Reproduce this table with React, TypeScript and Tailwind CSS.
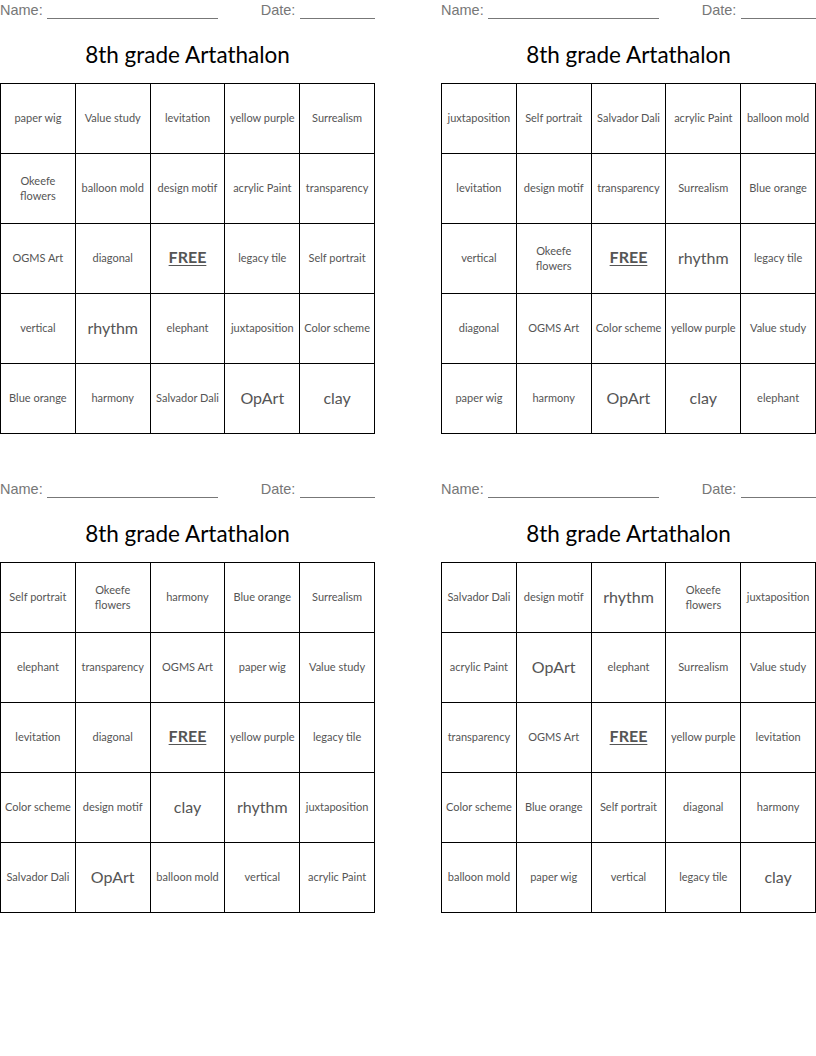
const BIG = new Set(["rhythm", "OpArt", "clay"]);

const cards: string[][] = [
  [
    "paper wig", "Value study", "levitation", "yellow purple", "Surrealism",
    "Okeefe flowers", "balloon mold", "design motif", "acrylic Paint", "transparency",
    "OGMS Art", "diagonal", "FREE", "legacy tile", "Self portrait",
    "vertical", "rhythm", "elephant", "juxtaposition", "Color scheme",
    "Blue orange", "harmony", "Salvador Dali", "OpArt", "clay",
  ],
  [
    "juxtaposition", "Self portrait", "Salvador Dali", "acrylic Paint", "balloon mold",
    "levitation", "design motif", "transparency", "Surrealism", "Blue orange",
    "vertical", "Okeefe flowers", "FREE", "rhythm", "legacy tile",
    "diagonal", "OGMS Art", "Color scheme", "yellow purple", "Value study",
    "paper wig", "harmony", "OpArt", "clay", "elephant",
  ],
  [
    "Self portrait", "Okeefe flowers", "harmony", "Blue orange", "Surrealism",
    "elephant", "transparency", "OGMS Art", "paper wig", "Value study",
    "levitation", "diagonal", "FREE", "yellow purple", "legacy tile",
    "Color scheme", "design motif", "clay", "rhythm", "juxtaposition",
    "Salvador Dali", "OpArt", "balloon mold", "vertical", "acrylic Paint",
  ],
  [
    "Salvador Dali", "design motif", "rhythm", "Okeefe flowers", "juxtaposition",
    "acrylic Paint", "OpArt", "elephant", "Surrealism", "Value study",
    "transparency", "OGMS Art", "FREE", "yellow purple", "levitation",
    "Color scheme", "Blue orange", "Self portrait", "diagonal", "harmony",
    "balloon mold", "paper wig", "vertical", "legacy tile", "clay",
  ],
];

function Cell({ word }: { word: string }) {
  if (word === "FREE") {
    return (
      <div className="h-[70px] border-r border-b border-black flex items-center justify-center pb-[3px]">
        <span className="text-[16px] font-bold underline underline-offset-2 text-[#555]">FREE</span>
      </div>
    );
  }
  return (
    <div className="h-[70px] border-r border-b border-black flex items-center justify-center px-[4px] pb-[2px] text-center">
      <span
        className={
          BIG.has(word)
            ? "text-[16px] leading-[18px] text-[#555]"
            : "text-[11px] leading-[15px] text-[#555]"
        }
      >
        {word}
      </span>
    </div>
  );
}

function Card({ words }: { words: string[] }) {
  return (
    <div className="w-[375px]">
      {/* NAME / DATE */}
      <div className="h-[22px] flex items-center text-[14.5px] text-[#777] font-['Liberation_Sans',Arial,sans-serif]">
        <span>Name:</span>
        <span className="ml-[4px] w-[171px] h-[16px] border-b border-[#777]" />
        <span className="ml-[43px]">Date:</span>
        <span className="ml-[5px] flex-1 h-[16px] border-b border-[#777]" />
      </div>

      {/* TITLE */}
      <h2 className="mt-[20px] mb-[15px] h-[26px] leading-[26px] text-center text-[22.5px] text-black">
        8th grade Artathalon
      </h2>

      {/* GRID */}
      <div className="grid grid-cols-5 border-t border-l border-black">
        {words.map((w, i) => (
          <Cell key={i} word={w} />
        ))}
      </div>
    </div>
  );
}

export default function App() {
  return (
    <div className="w-[816px] h-[1056px] bg-white font-['Lato',sans-serif]">
      <div className="grid grid-cols-[375px_375px] gap-x-[66px] gap-y-[45px]">
        {cards.map((c, i) => (
          <Card key={i} words={c} />
        ))}
      </div>
    </div>
  );
}
